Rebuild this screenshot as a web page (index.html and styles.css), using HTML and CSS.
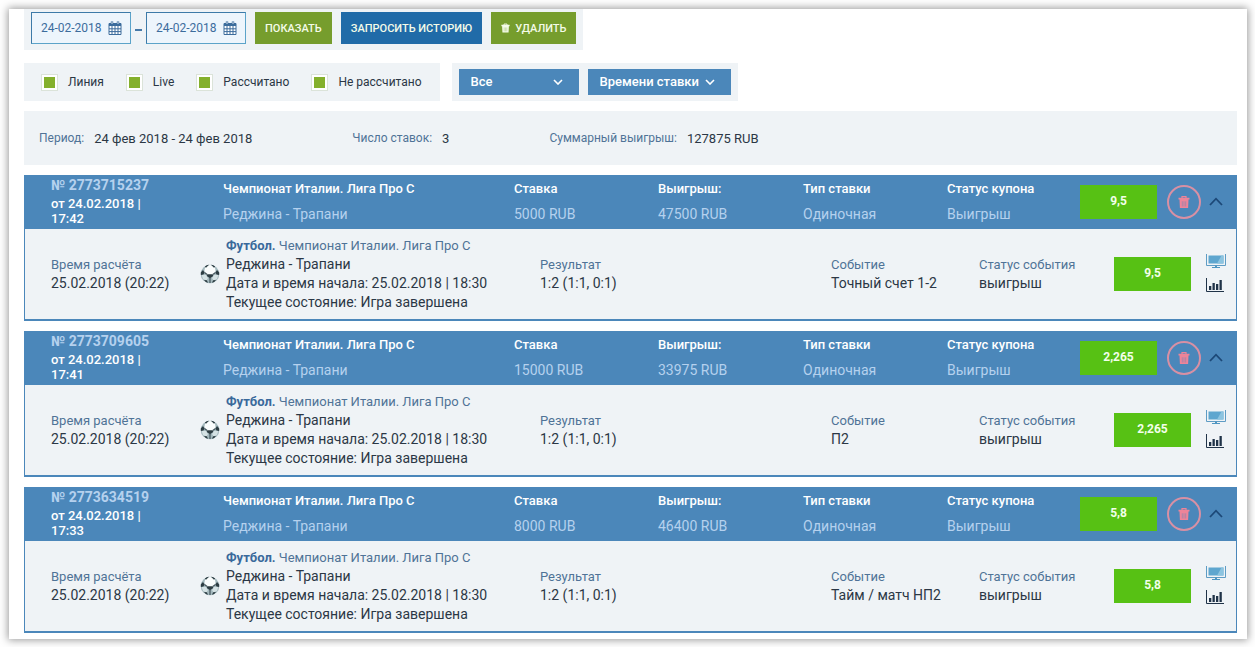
FILE: index.html
```
<!DOCTYPE html>
<html lang="ru">
<head>
<meta charset="utf-8">
<title>История ставок</title>
<link rel="stylesheet" href="styles.css">
</head>
<body>
<svg class="sprite" aria-hidden="true">
  <symbol id="calendar" viewBox="0 0 14 14">
    <path d="M1 2.500h12v11H1z" fill="#fff" stroke="currentColor"/>
    <path d="M1 2h12v3H1z" fill="currentColor"/>
    <path d="M4 5v8.500M7 5v8.500M10 5v8.500M1 7.800h12M1 10.600h12" stroke="currentColor" fill="none"/>
    <path d="M4 .5v3M10 .5v3" stroke="currentColor" stroke-width="2.400"/>
    <path d="M4 1v2M10 1v2" stroke="#fff" stroke-width=".8"/>
  </symbol>
  <symbol id="trash" viewBox="0 0 12 12">
    <path d="M4 2V.7h4V2" fill="none" stroke="currentColor" stroke-width="1.200"/>
    <path d="M.5 1.800h11v1.800H.5zM1.500 3.600h9l-.4 8.400H1.900z" fill="currentColor"/>
    <path d="M4.300 5.300v5.200M6 5.300v5.200M7.700 5.300v5.200" stroke="var(--slot)" stroke-width=".4"/>
  </symbol>
  <symbol id="down" viewBox="0 0 10 6"><path d="M1 1l4 4 4-4" fill="none" stroke="currentColor" stroke-width="1.600"/></symbol>
  <symbol id="up" viewBox="0 0 14 9"><path d="M1 8l6-6.300L13 8" fill="none" stroke="currentColor" stroke-width="1.800"/></symbol>
  <symbol id="monitor" viewBox="0 0 20 14">
    <path d="M.5 0v11.500H19.500V0" fill="none" stroke="#5e9cc4"/>
    <path d="M2.500 1.500h15v8h-15z" fill="#5ea6cf"/>
    <path d="M11 9.500l4.500-8h2v8z" fill="#8cc4e0"/>
    <path d="M9 11.500h2V13h3v1H6v-1h3z" fill="#4f96c2"/>
  </symbol>
  <symbol id="chart" viewBox="0 0 18 14">
    <path d="M.5 0v13.500H18" fill="none" stroke="currentColor"/>
    <path d="M3 8h2.300v4H3zM6.500 5h2.300v7H6.500zM10 6h2.300v6H10zM13.500 2h2.300v10h-2.300z" fill="currentColor"/>
  </symbol>
  <symbol id="ball" viewBox="0 0 20 20">
    <circle cx="10" cy="10" r="9.300" fill="#a3b8bd"/>
    <circle cx="10" cy="6.500" r="5.500" fill="#fafdfd"/>
    <path d="M1.500 10.500l4.500.5 2 3-1.500 2.500-3.500-1.500zM18.500 10.500L14 11l-2 3 1.500 2.500 3.500-1.500z" fill="#d5e2e4"/>
    <path d="M4.800 2.500Q7 .6 9 .8L6 3.800zM15.200 2.500Q13 .6 11 .8l3 3zM.8 8.500L3 6l1.500 2.500-1 2-2.600.4zM19.200 8.500L17 6l-1.500 2.500 1 2 2.600.4zM7.200 10.300h5.600l.4 1.800L10 14.300l-3.200-2.200zM4 16l2.800.2L8 18.800Q5.500 18.400 4 16zM16 16l-2.800.2-1.200 2.600q2.500-.4 4-2.800z" fill="#2c3c42"/>
    <path d="M4.500 8.500l2.700 2M15.500 8.500l-2.700 2M10 14v5" stroke="#43545b" stroke-width="1.200"/>
  </symbol>
</svg>
<main class="page">
  <form class="toolbar actions">
    <div class="period">
      <label class="date"><input type="text" value="24-02-2018" aria-label="Начало периода"><svg><use href="#calendar"/></svg></label>
      <span class="dash"></span>
      <label class="date"><input type="text" value="24-02-2018" aria-label="Конец периода"><svg><use href="#calendar"/></svg></label>
    </div>
    <button class="btn" type="button">ПОКАЗАТЬ</button>
    <button class="btn history" type="button">ЗАПРОСИТЬ ИСТОРИЮ</button>
    <button class="btn" type="button"><svg><use href="#trash"/></svg>УДАЛИТЬ</button>
  </form>

  <div class="filters">
    <div class="toolbar checks">
      <label><input type="checkbox" checked>Линия</label>
      <label><input type="checkbox" checked>Live</label>
      <label><input type="checkbox" checked>Рассчитано</label>
      <label><input type="checkbox" checked>Не рассчитано</label>
    </div>
    <div class="toolbar selects">
      <div class="select kind"><select aria-label="Тип"><option>Все</option></select><svg><use href="#down"/></svg></div>
      <div class="select order"><select aria-label="Сортировка"><option>Времени ставки</option></select><svg><use href="#down"/></svg></div>
    </div>
  </div>

  <dl class="summary">
    <div><dt>Период:</dt><dd>24 фев 2018 - 24 фев 2018</dd></div>
    <div><dt>Число ставок:</dt><dd>3</dd></div>
    <div><dt>Суммарный выигрыш:</dt><dd>127875 RUB</dd></div>
  </dl>

  <article class="coupon">
    <header class="head">
      <div class="number"><b>№ 2773715237</b><span>от 24.02.2018 | 17:42</span></div>
      <div><b>Чемпионат Италии. Лига Про С</b><span>Реджина - Трапани</span></div>
      <div><b>Ставка</b><span>5000 RUB</span></div>
      <div><b>Выигрыш:</b><span>47500 RUB</span></div>
      <div><b>Тип ставки</b><span>Одиночная</span></div>
      <div><b>Статус купона</b><span>Выигрыш</span></div>
      <div class="odds">9,5</div>
      <button class="remove" type="button" aria-label="Удалить"><svg><use href="#trash"/></svg></button>
      <button class="toggle" type="button" aria-label="Свернуть"><svg><use href="#up"/></svg></button>
    </header>
    <div class="body">
      <div class="settled"><span class="label">Время расчёта</span><span>25.02.2018 (20:22)</span></div>
      <svg class="ball"><use href="#ball"/></svg>
      <div class="event"><span class="label"><b>Футбол.</b> Чемпионат Италии. Лига Про С</span><span>Реджина - Трапани</span><span>Дата и время начала: 25.02.2018 | 18:30</span><span>Текущее состояние: Игра завершена</span></div>
      <div><span class="label">Результат</span><span>1:2 (1:1, 0:1)</span></div>
      <div><span class="label">Событие</span><span>Точный счет 1-2</span></div>
      <div><span class="label">Статус события</span><span>выигрыш</span></div>
      <div class="odds">9,5</div>
      <div class="links"><a href="#tv" aria-label="Трансляция"><svg class="monitor"><use href="#monitor"/></svg></a><a href="#stats" aria-label="Статистика"><svg class="chart"><use href="#chart"/></svg></a></div>
    </div>
  </article>

  <article class="coupon">
    <header class="head">
      <div class="number"><b>№ 2773709605</b><span>от 24.02.2018 | 17:41</span></div>
      <div><b>Чемпионат Италии. Лига Про С</b><span>Реджина - Трапани</span></div>
      <div><b>Ставка</b><span>15000 RUB</span></div>
      <div><b>Выигрыш:</b><span>33975 RUB</span></div>
      <div><b>Тип ставки</b><span>Одиночная</span></div>
      <div><b>Статус купона</b><span>Выигрыш</span></div>
      <div class="odds">2,265</div>
      <button class="remove" type="button" aria-label="Удалить"><svg><use href="#trash"/></svg></button>
      <button class="toggle" type="button" aria-label="Свернуть"><svg><use href="#up"/></svg></button>
    </header>
    <div class="body">
      <div class="settled"><span class="label">Время расчёта</span><span>25.02.2018 (20:22)</span></div>
      <svg class="ball"><use href="#ball"/></svg>
      <div class="event"><span class="label"><b>Футбол.</b> Чемпионат Италии. Лига Про С</span><span>Реджина - Трапани</span><span>Дата и время начала: 25.02.2018 | 18:30</span><span>Текущее состояние: Игра завершена</span></div>
      <div><span class="label">Результат</span><span>1:2 (1:1, 0:1)</span></div>
      <div><span class="label">Событие</span><span>П2</span></div>
      <div><span class="label">Статус события</span><span>выигрыш</span></div>
      <div class="odds">2,265</div>
      <div class="links"><a href="#tv" aria-label="Трансляция"><svg class="monitor"><use href="#monitor"/></svg></a><a href="#stats" aria-label="Статистика"><svg class="chart"><use href="#chart"/></svg></a></div>
    </div>
  </article>

  <article class="coupon">
    <header class="head">
      <div class="number"><b>№ 2773634519</b><span>от 24.02.2018 | 17:33</span></div>
      <div><b>Чемпионат Италии. Лига Про С</b><span>Реджина - Трапани</span></div>
      <div><b>Ставка</b><span>8000 RUB</span></div>
      <div><b>Выигрыш:</b><span>46400 RUB</span></div>
      <div><b>Тип ставки</b><span>Одиночная</span></div>
      <div><b>Статус купона</b><span>Выигрыш</span></div>
      <div class="odds">5,8</div>
      <button class="remove" type="button" aria-label="Удалить"><svg><use href="#trash"/></svg></button>
      <button class="toggle" type="button" aria-label="Свернуть"><svg><use href="#up"/></svg></button>
    </header>
    <div class="body">
      <div class="settled"><span class="label">Время расчёта</span><span>25.02.2018 (20:22)</span></div>
      <svg class="ball"><use href="#ball"/></svg>
      <div class="event"><span class="label"><b>Футбол.</b> Чемпионат Италии. Лига Про С</span><span>Реджина - Трапани</span><span>Дата и время начала: 25.02.2018 | 18:30</span><span>Текущее состояние: Игра завершена</span></div>
      <div><span class="label">Результат</span><span>1:2 (1:1, 0:1)</span></div>
      <div><span class="label">Событие</span><span>Тайм / матч НП2</span></div>
      <div><span class="label">Статус события</span><span>выигрыш</span></div>
      <div class="odds">5,8</div>
      <div class="links"><a href="#tv" aria-label="Трансляция"><svg class="monitor"><use href="#monitor"/></svg></a><a href="#stats" aria-label="Статистика"><svg class="chart"><use href="#chart"/></svg></a></div>
    </div>
  </article>
</main>
</body>
</html>
```
FILE: styles.css
```
* {
  box-sizing: border-box;
}

body {
  margin: 0;
  padding: 9px 8px 8px 9px;
  background: #fefefe;
  color: #2b3745;
  font-family: Roboto, "Open Sans", sans-serif;
  font-size: 14px;
  line-height: 19px;
}

button,
input,
select {
  margin: 0;
  border: 0;
  border-radius: 0;
  font: inherit;
}

.sprite {
  display: none;
}

.page {
  padding: 0 10px 6px 15px;
  background: #fff;
  box-shadow: 0 0 8px 1px rgba(0, 0, 0, 0.4);
}

.toolbar {
  display: flex;
  align-items: center;
  width: fit-content;
  background: #eff3f6;
}

/* Period and buttons */
.actions {
  gap: 9px;
  padding: 3px 7px 6px;
}

.period {
  display: flex;
  align-items: center;
  gap: 4px;
}

.date {
  display: flex;
  align-items: center;
  width: 100px;
  height: 32px;
  padding: 0 8px 0 9px;
  border: 1px solid #5ba3c9;
  border-top-color: #3d7aa8;
  border-left-color: #3d7aa8;
  background: #edf5fc;
  color: #3c6c9c;
}

.date input {
  flex: 1;
  min-width: 0;
  padding: 0;
  background: none;
  color: inherit;
  font-size: 12px;
}

.date svg {
  width: 14px;
  height: 14px;
}

.dash {
  width: 7px;
  height: 2px;
  margin-top: 3px;
  background: #4779a8;
}

.btn {
  display: flex;
  align-items: center;
  gap: 5px;
  height: 32px;
  padding: 0 10px;
  background: #769d2d;
  color: #f4fbe8;
  font-size: 11px;
  font-weight: 500;
  --slot: #769d2d;
}

.btn svg {
  width: 9px;
  height: 10px;
}

.history {
  background: #206ba8;
}

/* Filters */
.filters {
  display: flex;
  gap: 12px;
  margin-top: 13px;
}

.checks {
  gap: 22px;
  padding: 0 18px 0 17px;
  font-size: 12px;
}

.checks label {
  display: flex;
  align-items: center;
  gap: 10px;
}

.checks input {
  width: 17px;
  height: 17px;
  appearance: none;
  border: 1px solid #dbe3d9;
  background: #fff;
}

.checks input:checked {
  background: #84b02c content-box;
  padding: 2px;
  box-shadow: inset 0 0 0 2px #fff;
}

.selects {
  gap: 9px;
  padding: 6px 7px;
}

.select {
  display: grid;
  align-items: center;
  height: 26px;
  background: #4b87ba;
  color: #fff;
}

.select select,
.select svg {
  grid-area: 1 / 1;
}

.select select {
  width: 100%;
  height: 100%;
  padding: 0 12px 2px;
  appearance: none;
  background: none;
  color: inherit;
  font-size: 13px;
  font-weight: 500;
}

.select svg {
  justify-self: end;
  width: 10px;
  height: 6px;
  margin-right: 16px;
  pointer-events: none;
}

.kind {
  width: 120px;
}

.order {
  width: 143px;
}

/* Totals */
.summary {
  display: flex;
  align-items: center;
  gap: 100px;
  height: 54px;
  margin: 10px 0;
  padding: 0 15px;
  background: #eff3f6;
}

.summary div {
  display: flex;
  gap: 10px;
}

.summary dt {
  color: #4f7397;
  font-size: 12px;
}

.summary dd {
  margin: 0;
  font-size: 13px;
}

/* Coupons */
.coupon {
  margin-top: 10px;
  border: 1px solid #4b87ba;
  border-width: 0 1px 2px;
  background: #eff3f6;
}

.head,
.body {
  display: grid;
  align-items: center;
  padding-left: 26px;
}

.head {
  grid-template-columns: 172fr 291fr 144fr 145fr 144fr 133fr 77px 10px 34px 8px 14px;
  min-height: 54px;
  padding-right: 13px;
  background: #4b87ba;
  color: #b5d1ee;
  --slot: #4b87ba;
}

.head b,
.head span,
.body span {
  display: block;
}

.head span {
  padding-bottom: 2px;
}

.head b {
  margin-bottom: 7px;
  color: #fff;
  font-size: 13px;
  font-weight: 500;
}

.number span {
  width: 100px;
  color: #fff;
  font-size: 13px;
  font-weight: 500;
  line-height: 15px;
}

.head .number b {
  margin-bottom: 2px;
  color: #b5d1ee;
  font-size: 14px;
  font-weight: 700;
  line-height: 18px;
}

.odds {
  display: grid;
  place-items: center;
  width: 77px;
  height: 34px;
  padding-bottom: 1px;
  background: #57c114;
  color: #f2ffe9;
  font-size: 12px;
  font-weight: 700;
}

.remove {
  display: grid;
  grid-column: 9;
  place-items: center;
  height: 34px;
  padding: 0;
  border: 2px solid #d890a4;
  border-radius: 50%;
  background: none;
  color: #ee8499;
}

.remove svg {
  width: 12px;
  height: 12px;
}

.toggle {
  display: grid;
  grid-column: 11;
  padding: 0 0 2px;
  background: none;
  color: #1c4877;
}

.toggle svg {
  width: 14px;
  height: 9px;
}

.body {
  grid-template-columns: 149fr 26px 314fr 291fr 148fr 135fr 77px 15px 20px;
  min-height: 90px;
  padding-right: 10px;
}

.label {
  color: #4f7397;
  font-size: 13px;
}

.body .label b {
  color: #39699b;
}

.ball {
  width: 20px;
  height: 20px;
}

.links {
  display: grid;
  grid-column: 9;
  gap: 10px;
  padding-bottom: 2px;
  color: #203348;
}

.links a {
  display: grid;
  color: inherit;
}

.links svg {
  height: 14px;
}

.monitor {
  width: 20px;
}

.chart {
  width: 18px;
}
```
